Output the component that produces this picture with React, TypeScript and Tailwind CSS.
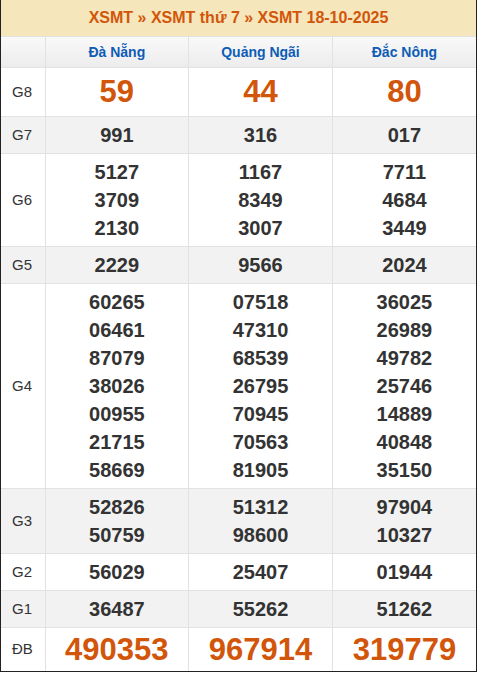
const rows: { label: string; cols: string[][]; big?: boolean; gray?: boolean }[] = [
  { label: "G8", cols: [["59"], ["44"], ["80"]], big: true },
  { label: "G7", cols: [["991"], ["316"], ["017"]], gray: true },
  {
    label: "G6",
    cols: [
      ["5127", "3709", "2130"],
      ["1167", "8349", "3007"],
      ["7711", "4684", "3449"],
    ],
  },
  { label: "G5", cols: [["2229"], ["9566"], ["2024"]], gray: true },
  {
    label: "G4",
    cols: [
      ["60265", "06461", "87079", "38026", "00955", "21715", "58669"],
      ["07518", "47310", "68539", "26795", "70945", "70563", "81905"],
      ["36025", "26989", "49782", "25746", "14889", "40848", "35150"],
    ],
  },
  {
    label: "G3",
    cols: [
      ["52826", "50759"],
      ["51312", "98600"],
      ["97904", "10327"],
    ],
    gray: true,
  },
  { label: "G2", cols: [["56029"], ["25407"], ["01944"]] },
  { label: "G1", cols: [["36487"], ["55262"], ["51262"]], gray: true },
  { label: "ĐB", cols: [["490353"], ["967914"], ["319779"]], big: true },
];

const provinces = ["Đà Nẵng", "Quảng Ngãi", "Đắc Nông"];

export default function App() {
  return (
    <div className="w-[477px] h-[674px] bg-white font-['Liberation_Sans',Arial,sans-serif]">
      <div className="border-x border-b border-[#222]">
        {/* title */}
        <div className="h-[36px] bg-[#f5e6bc] flex items-center justify-center text-[16px] font-bold text-[#d2560a]">
          XSMT » XSMT thứ 7 » XSMT 18-10-2025
        </div>

        <table className="w-full border-collapse table-fixed">
          <colgroup>
            <col className="w-[44px]" />
            <col />
            <col />
            <col />
          </colgroup>
          <thead>
            <tr className="bg-gradient-to-b from-[#f9f9f9] to-[#ececec]">
              <th className="h-[31px] border border-[#e2e2e2] border-l-0"></th>
              {provinces.map((p, i) => (
                <th
                  key={p}
                  className={`h-[31px] border border-[#e2e2e2] text-[14px] font-bold text-[#0d5cb6] ${
                    i === 2 ? "border-r-0" : ""
                  }`}
                >
                  {p}
                </th>
              ))}
            </tr>
          </thead>
          <tbody>
            {rows.map((r, ri) => (
              <tr key={r.label} className={r.gray ? "bg-[#f2f2f2]" : "bg-white"}>
                <td
                  className={`border border-[#e2e2e2] border-l-0 pl-[11px] text-[15px] text-[#333] ${
                    ri === rows.length - 1 ? "border-b-0" : ""
                  }`}
                >
                  {r.label}
                </td>
                {r.cols.map((c, ci) => (
                  <td
                    key={ci}
                    className={`border border-[#e2e2e2] text-center py-[4px] ${
                      ci === 2 ? "border-r-0" : ""
                    } ${ri === rows.length - 1 ? "border-b-0" : ""}`}
                  >
                    {c.map((n) => (
                      <div
                        key={n}
                        className={
                          r.big
                            ? `text-[31px] font-bold text-[#d2560a] ${
                                r.label === "G8" ? "leading-[40px]" : "leading-[35px]"
                              }`
                            : "text-[20px] font-bold text-[#333] leading-[28px]"
                        }
                      >
                        {n}
                      </div>
                    ))}
                  </td>
                ))}
              </tr>
            ))}
          </tbody>
        </table>
      </div>
    </div>
  );
}
